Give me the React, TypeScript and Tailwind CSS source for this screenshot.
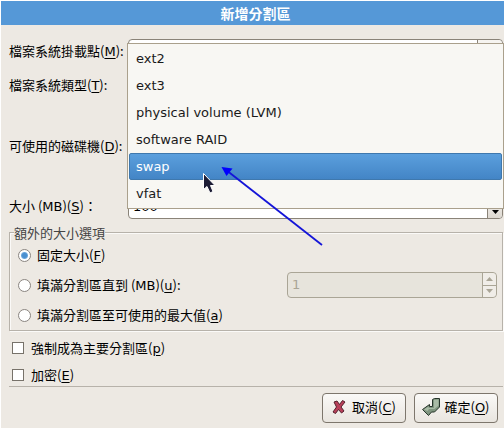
import { useState, type ReactNode } from "react";

const CJK = "font-['Noto_Sans_CJK_TC','DejaVu_Sans',sans-serif]";
const LATIN = "font-['DejaVu_Sans','Noto_Sans_CJK_TC',sans-serif]";

function Key({ children }: { children: ReactNode }) {
  return <span className={`${LATIN} underline underline-offset-2`}>{children}</span>;
}

const fileSystems = ["ext2", "ext3", "physical volume (LVM)", "software RAID", "swap", "vfat"];

const field = "min-w-0 rounded border border-[#8a8378] bg-white";
const radio =
  "h-[13px] w-[13px] shrink-0 appearance-none rounded-full border border-[#8a8580] bg-white checked:bg-[radial-gradient(circle,#4a90d0_0_2px,#6ba6dc_3px,#ffffff_4px)]";
const check =
  "h-3 w-3 shrink-0 appearance-none border border-[#77726a] bg-white checked:bg-[#4a90d0]";
const button =
  "flex h-[30px] w-[84px] items-center justify-center rounded border border-[#7d766c] bg-linear-to-b from-[#faf9f7] to-[#e9e5df] pb-0.5";

function FileSystemMenu({ value, onPick }: { value: string; onPick: (v: string) => void }) {
  return (
    <ul
      role="listbox"
      aria-label="檔案系統類型"
      className={`absolute top-1 -right-px left-[118px] border border-[#aaa08c] bg-[#f8f7f3] p-px ${LATIN}`}
    >
      {fileSystems.map((name) => (
        <li
          key={name}
          role="option"
          aria-selected={name === value}
          onClick={() => onPick(name)}
          className={
            name === value
              ? "h-[27px] rounded-xs border border-[#3f78ad] bg-linear-to-b from-[#5b9fdd] to-[#4385c6] px-1.5 leading-[25px] text-white"
              : "h-[27px] border border-transparent px-1.5 leading-[25px] text-[#1a1a1a]"
          }
        >
          {name}
        </li>
      ))}
    </ul>
  );
}

export default function App() {
  const [fs, setFs] = useState("swap");
  const [mode, setMode] = useState("fixed");

  return (
    <div
      className={`relative w-full border-t border-l border-white bg-[#ede9e3] text-[13px] leading-5 text-black ${CJK}`}
    >
      <h1 className="h-6 bg-[#5598d7] pl-1.5 text-center text-sm leading-6 font-bold text-white">
        新增分割區
      </h1>

      <form className="pt-3.5 pr-px pb-[5px] pl-2" onSubmit={(e) => e.preventDefault()}>
        <div className="relative grid grid-cols-[119px_1fr] items-center gap-y-2">
          <label htmlFor="mount">
            檔案系統掛載點(<Key>M</Key>):
          </label>
          <div className={`flex h-6 ${field}`}>
            <input id="mount" className="min-w-0 flex-1 px-1 outline-none" />
            <button
              type="button"
              aria-label="選擇掛載點"
              className="w-[25px] rounded-r border-l border-[#8a8378] bg-[#f6f4f0]"
            />
          </div>

          <label htmlFor="fstype">
            檔案系統類型(<Key>T</Key>):
          </label>
          <select
            id="fstype"
            value={fs}
            onChange={(e) => setFs(e.target.value)}
            className={`h-7 appearance-none px-1 ${field} ${LATIN}`}
          >
            {fileSystems.map((name) => (
              <option key={name}>{name}</option>
            ))}
          </select>

          <label htmlFor="drives">
            可使用的磁碟機(<Key>D</Key>):
          </label>
          <select id="drives" multiple className={`h-[79px] ${field}`} />

          <label htmlFor="size">
            大小 (<span className={LATIN}>MB</span>)(<Key>S</Key>)：
          </label>
          <div className={`flex h-[25px] ${field}`}>
            <input
              id="size"
              defaultValue="100"
              className={`min-w-0 flex-1 px-1 outline-none ${LATIN}`}
            />
            <button
              type="button"
              aria-label="減少"
              className="flex w-[15px] items-end justify-center rounded-r border-l border-[#8a8378] bg-linear-to-b from-[#faf9f7] to-[#ddd8d0] pb-1"
            >
              <svg className="h-1 w-[7px]" viewBox="0 0 7 4">
                <path d="M0 0h7L3.5 4z" />
              </svg>
            </button>
          </div>

          <FileSystemMenu value={fs} onPick={setFs} />
        </div>

        <fieldset className="mt-1 border border-[#b7b2aa] pr-[5px] pb-0.5 pl-2 shadow-[1px_1px_0_#fbfaf8,inset_1px_1px_0_#fbfaf8]">
          <legend className="-ml-1 bg-[#ede9e3] leading-[19px] text-[#444444]">
            額外的大小選項
          </legend>
          <div className="flex flex-col gap-1">
            <label className="flex h-[26px] items-center gap-1.5">
              <input
                type="radio"
                name="mode"
                className={radio}
                checked={mode === "fixed"}
                onChange={() => setMode("fixed")}
              />
              <span>
                固定大小(<Key>F</Key>)
              </span>
            </label>
            <div className="flex h-[26px] items-center justify-between">
              <label className="flex items-center gap-1.5">
                <input
                  type="radio"
                  name="mode"
                  className={radio}
                  checked={mode === "upto"}
                  onChange={() => setMode("upto")}
                />
                <span>
                  填滿分割區直到 (<span className={LATIN}>MB</span>)(<Key>u</Key>):
                </span>
              </label>
              <div className="flex h-[26px] w-[210px] rounded border border-[#aaa596] bg-[#e7e4dc]">
                <input
                  aria-label="填滿分割區直到 (MB)"
                  disabled={mode !== "upto"}
                  defaultValue="1"
                  className={`min-w-0 flex-1 px-1 text-[#aaa596] ${LATIN}`}
                />
                <div className="flex w-3.5 flex-col rounded-r border-l border-[#aaa596] bg-[#f0ede8]">
                  <button
                    type="button"
                    aria-label="增加上限"
                    className="flex flex-1 items-center justify-center border-b border-[#aaa596]"
                  >
                    <svg className="h-1 w-[7px]" viewBox="0 0 7 4">
                      <path d="M0 4h7L3.5 0z" fill="#aaa596" />
                    </svg>
                  </button>
                  <button
                    type="button"
                    aria-label="減少上限"
                    className="flex flex-1 items-center justify-center"
                  >
                    <svg className="h-1 w-[7px]" viewBox="0 0 7 4">
                      <path d="M0 0h7L3.5 4z" fill="#aaa596" />
                    </svg>
                  </button>
                </div>
              </div>
            </div>
            <label className="flex h-[26px] items-center gap-1.5">
              <input
                type="radio"
                name="mode"
                className={radio}
                checked={mode === "max"}
                onChange={() => setMode("max")}
              />
              <span>
                填滿分割區至可使用的最大值(<Key>a</Key>)
              </span>
            </label>
          </div>
        </fieldset>

        <div className="mt-[7px] flex flex-col gap-[7px] border-b border-[#b7b2aa] pb-px pl-[3px]">
          <label className="flex h-5 items-center gap-[7px]">
            <input type="checkbox" className={check} />
            <span>
              強制成為主要分割區(<Key>p</Key>)
            </span>
          </label>
          <label className="flex h-5 items-center gap-[7px]">
            <input type="checkbox" className={check} />
            <span>
              加密(<Key>E</Key>)
            </span>
          </label>
        </div>

        <div className="mt-1.5 flex justify-end gap-2 pr-[5px]">
          <button type="button" className={`${button} gap-1.5`}>
            <svg className="h-4 w-3.5" viewBox="0 0 14 16">
              <path
                d="M2 3L5 2L7.500 5.500L10.500 1.500L13 3L9 8L12 12L9.500 14L6.500 10.500L3.500 14.500L1 13L4.500 8z"
                fill="#b8405a"
                stroke="#54202c"
                strokeWidth="1"
                strokeLinejoin="round"
              />
            </svg>
            <span>
              取消(<Key>C</Key>)
            </span>
          </button>
          <button type="submit" className={`${button} gap-1`}>
            <svg className="h-[18px] w-[18px] shrink-0" viewBox="0 0 18 18">
              <path
                d="M10.500 1.500L12.500 .500H17.500V9L12.500 14H9.500L6.500 17.500L.500 11.500L7.500 6.500V8.500H10.500z"
                fill="#7f957f"
                stroke="#26342a"
                strokeWidth="1"
                strokeLinejoin="round"
              />
              <path d="M12 2L16.500 1.500V7.500L12.500 11H7L5.500 13L2 11.500L6.500 8.500V10H12z" fill="#a9bba6" />
            </svg>
            <span>
              確定(<Key>O</Key>)
            </span>
          </button>
        </div>
      </form>

      <svg
        className="pointer-events-none absolute top-[166px] left-[200px] h-20 w-[124px]"
        viewBox="0 0 124 80"
      >
        <path d="M27 4.500L121 78" stroke="#1414d8" strokeWidth="1.800" />
        <path d="M20.500 0L31.500 1.500L25.500 9z" fill="#0000ff" />
        <path
          d="M2.500 6.500V22.500L6 19.500L9 26L12 24.500L9.500 18.500H14z"
          fill="#1c1c34"
          stroke="#ffffff"
          strokeWidth="1"
        />
      </svg>
    </div>
  );
}
